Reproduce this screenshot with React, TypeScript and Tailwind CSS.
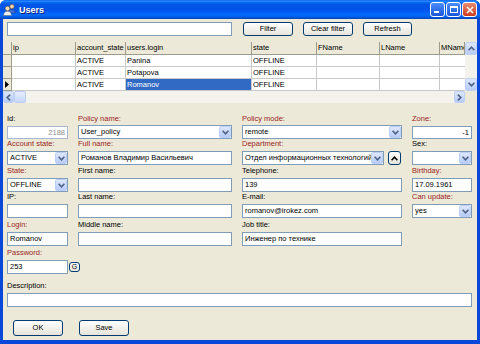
const RED = 'text-[#9b2424]';

function Chevron({ up = false, color = '#4d6185' }: { up?: boolean; color?: string }) {
  return (
    <svg width="7" height="5" viewBox="0 0 7 5">
      <path
        d={up ? 'M0.6 4.2 L3.5 1.2 L6.4 4.2' : 'M0.6 0.8 L3.5 3.8 L6.4 0.8'}
        fill="none"
        stroke={color}
        strokeWidth="1.6"
      />
    </svg>
  );
}

function SideChevron({ left = false }: { left?: boolean }) {
  return (
    <svg width="5" height="7" viewBox="0 0 5 7">
      <path
        d={left ? 'M4.2 0.6 L1.2 3.5 L4.2 6.4' : 'M0.8 0.6 L3.8 3.5 L0.8 6.4'}
        fill="none"
        stroke="#4d6185"
        strokeWidth="1.6"
      />
    </svg>
  );
}

function ComboButton() {
  return (
    <div className="w-[12px] h-[12px] shrink-0 rounded-[2px] border border-[#bccff7] bg-gradient-to-b from-[#dde8fe] to-[#b7cbf6] flex items-center justify-center">
      <Chevron />
    </div>
  );
}

function XpButton({ label, className = '', children }: { label?: string; className?: string; children?: React.ReactNode }) {
  return (
    <div
      className={`flex items-center justify-center rounded-[3px] border border-[#003c74] bg-gradient-to-b from-[#ffffff] to-[#e6e4da] text-black ${className}`}
    >
      {label}
      {children}
    </div>
  );
}

function TextBox({ value = '', right = false, muted = false, className = '' }: { value?: string; right?: boolean; muted?: boolean; className?: string }) {
  return (
    <div
      className={`h-[14px] border bg-white px-[2px] leading-[12px] whitespace-nowrap overflow-hidden ${
        muted ? 'border-[#a7b8cf] text-[#8c8c8c]' : 'border-[#7f9db9] text-black'
      } ${right ? 'text-right' : ''} ${className}`}
    >
      {value}
    </div>
  );
}

function Combo({ value = '', className = '' }: { value?: string; className?: string }) {
  return (
    <div className={`h-[14px] border border-[#7f9db9] bg-white flex items-center ${className}`}>
      <div className="flex-1 px-[2px] leading-[12px] whitespace-nowrap overflow-hidden">{value}</div>
      <ComboButton />
    </div>
  );
}

function Field({ label, red = false, children }: { label: string; red?: boolean; children: React.ReactNode }) {
  return (
    <div className="flex flex-col">
      <div className={`h-[12px] leading-[10px] whitespace-nowrap ${red ? RED : 'text-black'}`}>{label}</div>
      {children}
    </div>
  );
}

function TitleIcon() {
  return (
    <svg width="13" height="13" viewBox="0 0 13 13">
      <circle cx="9" cy="3.5" r="2.2" fill="#f3d2a8" stroke="#6b4a2a" strokeWidth="0.5" />
      <path d="M5.5 10 Q6 6.3 9 6.3 Q12 6.3 12.5 10 Z" fill="#3b6fd8" stroke="#1d3f8a" strokeWidth="0.5" />
      <circle cx="4.5" cy="5.5" r="2.3" fill="#f6dcb6" stroke="#6b4a2a" strokeWidth="0.5" />
      <path d="M0.5 12.5 Q1 8.3 4.5 8.3 Q8 8.3 8.5 12.5 Z" fill="#f2f2f2" stroke="#6a6a6a" strokeWidth="0.5" />
    </svg>
  );
}

const cols = 'grid grid-cols-[9px_64px_50px_126px_65px_63px_60px_25px]';

const headers = ['ip', 'account_state', 'users.login', 'state', 'FName', 'LName', 'MName'];

const rows = [
  { login: 'Panina', current: false },
  { login: 'Potapova', current: false },
  { login: 'Romanov', current: true },
];

function DataGrid() {
  return (
    <div className="mt-[6px] flex flex-col">
      <div className="flex">
        <div className="flex flex-col w-[462px]">
          <div className={`${cols} h-[13px]`}>
            <div className="bg-[#ece9d8] border-r border-b border-[#9d9a8e]" />
            {headers.map((h) => (
              <div
                key={h}
                className="bg-[#ece9d8] border-r border-b border-[#9d9a8e] px-[1px] leading-[12px] whitespace-nowrap overflow-hidden"
              >
                {h}
              </div>
            ))}
          </div>
          {rows.map((r) => (
            <div key={r.login} className={`${cols} h-[12px]`}>
              <div className="bg-[#ece9d8] border-r border-b border-[#9d9a8e] flex items-center pl-[2px]">
                {r.current && (
                  <svg width="4" height="7" viewBox="0 0 4 7">
                    <path d="M0 0 L4 3.5 L0 7 Z" fill="#000" />
                  </svg>
                )}
              </div>
              <div className="bg-white border-r border-b border-[#c8c8c8]" />
              <div className="bg-white border-r border-b border-[#c8c8c8] px-[1px] leading-[11px]">ACTIVE</div>
              <div
                className={`border-r border-b border-[#c8c8c8] px-[1px] leading-[11px] ${
                  r.current ? 'bg-[#316ac5] text-white' : 'bg-white'
                }`}
              >
                {r.login}
              </div>
              <div className="bg-white border-r border-b border-[#c8c8c8] px-[1px] leading-[11px]">OFFLINE</div>
              <div className="bg-white border-r border-b border-[#c8c8c8]" />
              <div className="bg-white border-r border-b border-[#c8c8c8]" />
              <div className="bg-white border-b border-[#c8c8c8]" />
            </div>
          ))}
        </div>
        <div className="w-[12px] flex flex-col bg-[#f3f2ec]">
          <div className="h-[13px] rounded-[2px] border border-[#bccff7] bg-gradient-to-b from-[#dde8fe] to-[#b7cbf6] flex items-center justify-center">
            <Chevron up />
          </div>
          <div className="flex-1" />
          <div className="h-[13px] rounded-[2px] border border-[#bccff7] bg-gradient-to-b from-[#dde8fe] to-[#b7cbf6] flex items-center justify-center">
            <Chevron />
          </div>
        </div>
      </div>
      <div className="flex h-[12px]">
        <div className="w-[462px] flex bg-[#f3f2ec]">
          <div className="w-[11px] rounded-[2px] border border-[#bccff7] bg-gradient-to-b from-[#dde8fe] to-[#b7cbf6] flex items-center justify-center">
            <SideChevron left />
          </div>
          <div className="w-[12px] rounded-[2px] border border-[#bccff7] bg-gradient-to-b from-[#e6eefe] to-[#c6d6f8]" />
          <div className="flex-1" />
          <div className="w-[11px] rounded-[2px] border border-[#bccff7] bg-gradient-to-b from-[#dde8fe] to-[#b7cbf6] flex items-center justify-center">
            <SideChevron />
          </div>
        </div>
        <div className="w-[12px] bg-[#ece9d8]" />
      </div>
    </div>
  );
}

export default function App() {
  return (
    <div className="w-[480px] h-[344px] flex flex-col bg-[#0a48d9] rounded-t-[6px] overflow-hidden font-['Liberation_Sans',Arial,sans-serif] text-[7.5px] text-black">
      {/* title bar */}
      <div className="h-[19px] shrink-0 flex items-center pl-[3px] pr-[3px] bg-[linear-gradient(180deg,#0058ee_0%,#3593ff_6%,#0f74fb_10%,#0262ee_16%,#0054e3_26%,#0055eb_56%,#026afe_76%,#0062ef_86%,#0052d6_94%,#0040ab_100%)]">
        <TitleIcon />
        <div className="ml-[3px] text-white font-bold text-[9px] leading-[12px] [text-shadow:1px_1px_0_#0a1e80]">Users</div>
        <div className="flex-1" />
        <div className="flex gap-[1px]">
          <div className="w-[15px] h-[15px] rounded-[3px] border border-white bg-gradient-to-b from-[#4d8dfb] to-[#1a55d8] flex items-end pl-[3px] pb-[3px]">
            <div className="w-[5px] h-[2px] bg-white" />
          </div>
          <div className="w-[15px] h-[15px] rounded-[3px] border border-white bg-gradient-to-b from-[#4d8dfb] to-[#1a55d8] flex items-center justify-center">
            <div className="w-[8px] h-[7px] border border-white border-t-2" />
          </div>
          <div className="w-[15px] h-[15px] rounded-[3px] border border-white bg-gradient-to-b from-[#e88a6e] to-[#c93b1a] flex items-center justify-center">
            <svg width="8" height="8" viewBox="0 0 8 8">
              <path d="M1 1 L7 7 M7 1 L1 7" stroke="#fff" strokeWidth="1.6" />
            </svg>
          </div>
        </div>
      </div>

      {/* body */}
      <div className="flex-1 flex px-[3px] pb-[4px]">
        <div className="flex-1 flex flex-col bg-[#ece9d8]">
          <div className="flex items-center pt-[3px] pl-[4px] gap-[10px]">
            <TextBox className="w-[225px]" />
            <div className="flex gap-[10px] ml-[1px]">
              <XpButton label="Filter" className="w-[50px] h-[14px]" />
              <XpButton label="Clear filter" className="w-[50px] h-[14px]" />
              <XpButton label="Refresh" className="w-[49px] h-[14px]" />
            </div>
          </div>

          <DataGrid />

          <div className="mt-[11px] pl-[4px] grid grid-cols-[61px_154px_160px_60px] grid-rows-[25px_27px_26px_28px_28px_28px] gap-x-[10px]">
            <Field label="Id:">
              <TextBox value="2188" right muted />
            </Field>
            <Field label="Policy name:" red>
              <Combo value="User_policy" />
            </Field>
            <Field label="Policy mode:" red>
              <Combo value="remote" />
            </Field>
            <Field label="Zone:" red>
              <TextBox value="-1" right />
            </Field>

            <Field label="Account state:" red>
              <Combo value="ACTIVE" />
            </Field>
            <Field label="Full name:" red>
              <TextBox value="Романов Владимир Васильевич" />
            </Field>
            <Field label="Department:" red>
              <div className="flex items-center">
                <Combo value="Отдел информационных технологий" className="w-[142px]" />
                <XpButton className="ml-[4px] w-[13px] h-[14px] rounded-[2px]">
                  <Chevron up color="#000" />
                </XpButton>
              </div>
            </Field>
            <Field label="Sex:">
              <Combo />
            </Field>

            <Field label="State:" red>
              <Combo value="OFFLINE" />
            </Field>
            <Field label="First name:">
              <TextBox />
            </Field>
            <Field label="Telephone:">
              <TextBox value="139" />
            </Field>
            <Field label="Birthday:" red>
              <TextBox value="17.09.1961" />
            </Field>

            <Field label="IP:">
              <TextBox />
            </Field>
            <Field label="Last name:">
              <TextBox />
            </Field>
            <Field label="E-mail:">
              <TextBox value="romanov@irokez.com" />
            </Field>
            <Field label="Can update:" red>
              <Combo value="yes" />
            </Field>

            <Field label="Login:" red>
              <TextBox value="Romanov" />
            </Field>
            <Field label="Middle name:">
              <TextBox />
            </Field>
            <Field label="Job title:">
              <TextBox value="Инженер по технике" />
            </Field>
            <div />

            <div className="col-span-2">
              <Field label="Password:" red>
                <div className="flex items-center">
                  <TextBox value="253" className="w-[61px]" />
                  <XpButton label="G" className="ml-[1px] w-[11px] h-[10px] rounded-[2px] text-[7px] leading-[8px]" />
                </div>
              </Field>
            </div>
          </div>

          <div className="mt-[5px] pl-[4px] pr-[5px]">
            <Field label="Description:">
              <TextBox />
            </Field>
          </div>

          <div className="mt-[13px] pl-[10px] flex gap-[16px]">
            <XpButton label="OK" className="w-[50px] h-[16px]" />
            <XpButton label="Save" className="w-[50px] h-[16px]" />
          </div>
        </div>
      </div>
    </div>
  );
}
